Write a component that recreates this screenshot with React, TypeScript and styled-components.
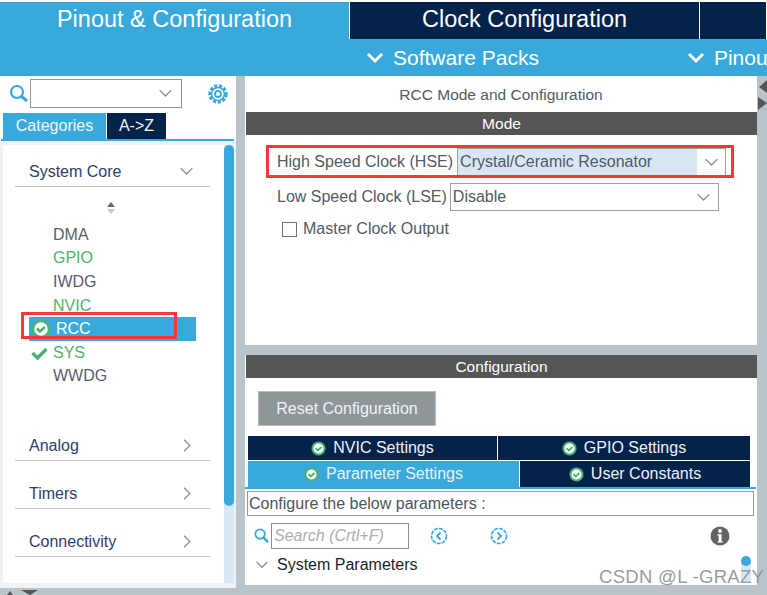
import React from "react";
import styled, { createGlobalStyle } from "styled-components";

const Global = createGlobalStyle`
  html, body { margin: 0; padding: 0; background: #fff; }
  #root { width: 767px; height: 595px; overflow: hidden; }
  * { box-sizing: border-box; }
`;
const Page = styled.div`
  position: relative; width: 767px; height: 595px; overflow: hidden;
  display: flex; flex-direction: column; padding-top: 2px; background: #fff;
  font-family: "Liberation Sans", Arial, sans-serif; color: #545a5f;
`;
const TopTabs = styled.div`display: flex; height: 37px; flex: none;`;
const TopTab = styled.div<{ $active?: boolean; $w: number }>`
  width: ${p => p.$w}px; flex: none; display: flex; align-items: center; justify-content: center;
  font-size: 23.5px; color: #fff; padding-bottom: 2px;
  background: ${p => (p.$active ? "#39a9dc" : "#03234b")};
  border-right: 1px solid #fff;
`;
const SubBar = styled.div`
  height: 37px; flex: none; background: #39a9dc; display: flex; align-items: center;
  color: #fff; font-size: 21px; white-space: nowrap; padding-left: 366px; gap: 148px; overflow: hidden;
`;
const SubItem = styled.div`display: flex; align-items: center; gap: 9px;`;
const Main = styled.div`flex: 1; display: flex; min-height: 0; background: #b8c4ca;`;
const Left = styled.div`
  width: 236px; flex: none; height: 512px; background: #fff; display: flex; flex-direction: column;
`;
const SearchRow = styled.div`display: flex; align-items: center; height: 29px; margin-top: 3px; padding-left: 9px;`;
const Combo = styled.div`
  width: 152px; height: 29px; margin-left: 1px; border: 1px solid #909599; display: flex;
  align-items: center; justify-content: flex-end; padding-right: 8px; background: #fff;
`;
const Gear = styled.div`margin-left: 25px; display: flex;`;
const CatTabs = styled.div`
  display: flex; gap: 1px; margin-top: 5px; margin-left: 3px; height: 26px; flex: none;
`;
const CatTab = styled.div<{ $active?: boolean; $w: number }>`
  width: ${p => p.$w}px; display: flex; align-items: center; justify-content: center;
  color: #f2f6f9; font-size: 16px; background: ${p => (p.$active ? "#39a9dc" : "#03234b")};
`;
const BlueRule = styled.div<{ $w: number; $ml: number }>`
  flex: none; height: 2px; width: ${p => p.$w}px; margin-left: ${p => p.$ml}px; background: #39a9dc;
`;
const ListFrame = styled.div`
  flex: 1; display: flex; background: #f0f2f5; padding: 4px 2px 5px 3px; min-height: 0;
`;
const List = styled.div`
  flex: 1; background: #fff; padding: 0 12px; display: flex; flex-direction: column; min-width: 0;
`;
const Scroll = styled.div`width: 10px; flex: none; background: #d8e7f4; display: flex;`;
const Thumb = styled.div`width: 100%; height: 361px; background: #39a9dc; border-radius: 5px;`;
const Category = styled.div<{ $mt: number }>`
  flex: none; height: 30px; margin-top: ${p => p.$mt}px; width: 195px;
  border-bottom: 1px solid #b8c2cb; display: flex; align-items: center; justify-content: space-between;
  padding: 0 16px 0 14px; color: #2d3e6b; font-size: 16px;
`;
const Sorter = styled.div`display: flex; justify-content: center; margin: 14px 0 0; width: 191px; height: 16px;`;
const Items = styled.div`display: flex; flex-direction: column; margin: 6px -12px 0 -12px;`;
const Item = styled.div<{ $ok?: boolean; $sel?: boolean }>`
  height: 23.6px; display: flex; align-items: center; font-size: 16px; margin-left: 26px; width: 167px;
  padding-left: ${p => (p.$sel || p.$ok ? "2px" : "24px")}; gap: 5px; white-space: nowrap;
  color: ${p => (p.$sel ? "#fff" : p.$ok ? "#4eb46a" : "#5b5e69")};
  background: ${p => (p.$sel ? "#39a9dc" : "transparent")};
`;
const Right = styled.div`
  width: 512px; margin-left: 9px; flex: none; height: 509px; display: flex; flex-direction: column; background: #fff;
`;
const PanelTitle = styled.div`
  height: 36px; flex: none; display: flex; align-items: center; justify-content: center;
  font-size: 15.5px; color: #545a5f; padding-top: 2px;
`;
const DarkBar = styled.div`
  height: 23px; flex: none; background: #545555; color: #fff; font-size: 15.5px;
  display: flex; align-items: center; justify-content: center; margin-left: 1px;
`;
const ModeBody = styled.div`height: 210px; flex: none; padding: 13px 34px 0 32px; display: flex; flex-direction: column;`;
const FormRow = styled.div`display: flex; align-items: center; gap: 4px; height: 28px; font-size: 16px; white-space: nowrap;`;
const Select = styled.div<{ $hl?: boolean }>`
  width: 269px; height: 28px; border: 1px solid #9aa0a4; display: flex; align-items: center;
  padding-left: 2px; justify-content: space-between; background: #fff; flex: none; overflow: hidden;
`;
const SelectText = styled.div<{ $hl?: boolean }>`
  flex: 1; align-self: stretch; display: flex; align-items: center;
  background: ${p => (p.$hl ? "#d7e7f5" : "transparent")}; margin-left: -2px; padding-left: 2px;
`;
const Caret = styled.div`width: 28px; flex: none; display: flex; justify-content: center;`;
const CheckRow = styled.div`display: flex; align-items: center; margin: 4px 0 0 5px; gap: 6px; height: 28px; font-size: 16px;`;
const Box = styled.div`width: 15px; height: 15px; border: 1px solid #6f7377; background: #fff;`;
const Band = styled.div`height: 10px; flex: none; background: #b8c4ca;`;
const ConfigBody = styled.div`flex: 1; min-height: 0; display: flex; flex-direction: column;`;
const ResetBtn = styled.div`
  width: 178px; height: 35px; margin: 13px 0 10px 13px; flex: none; background: #8f9699; border: 1px solid #b4bcc1;
  color: #f2f4f5; font-size: 16px; display: flex; align-items: center; justify-content: center;
`;
const TabRow = styled.div`display: flex; margin-left: 3px; width: 502px; gap: 1px; flex: none; height: 24px;`;
const SetTab = styled.div<{ $active?: boolean; $w: number }>`
  width: ${p => p.$w}px; flex: none; display: flex; align-items: center; justify-content: center; gap: 7px;
  font-size: 16px; color: #eef2f6; background: ${p => (p.$active ? "#39a9dc" : "#03234b")};
`;
const ParamBox = styled.div`
  height: 25px; margin: 2px 3px 0 2px; border: 1px solid #94999c; flex: none; display: flex; align-items: center;
  font-size: 16px; color: #4d5560; padding-left: 1px;
`;
const SearchLine = styled.div`display: flex; align-items: center; height: 27px; margin-top: 6px; padding-left: 9px; flex: none; padding-right: 27px;`;
const SearchBox = styled.div`
  width: 138px; height: 26px; margin-left: 2px; border: 1px solid #8b8f92; display: flex; align-items: center;
  font-style: italic; font-size: 16px; color: #a9aeb2; padding-left: 2px;
`;
const NavIcons = styled.div`display: flex; gap: 42px; margin-left: 21px;`;
const InfoSlot = styled.div`margin-left: auto; display: flex;`;
const SysRow = styled.div`
  display: flex; align-items: center; gap: 8px; padding-left: 10px; height: 20px; margin-top: 6px;
  font-size: 16px; color: #1b1f27; flex: none;
`;
const RedBox = styled.div<{ $x: number; $y: number; $w: number; $h: number }>`
  position: absolute; left: ${p => p.$x}px; top: ${p => p.$y}px; width: ${p => p.$w}px; height: ${p => p.$h}px;
  border: 3px solid #f7383b; pointer-events: none;
`;
const Watermark = styled.div`
  position: absolute; left: 599px; top: 566px; font-size: 18.5px; color: #8f9294; opacity: .9;
  font-family: "Liberation Sans", sans-serif; white-space: nowrap; letter-spacing: .3px;
`;
const Dot = styled.div`
  position: absolute; left: 741px; top: 556px; width: 10px; height: 10px; border-radius: 50%; background: #39a9dc;
`;
const DotTrack = styled.div`
  position: absolute; left: 741px; top: 561px; width: 10px; height: 20px; background: #d8e7f4;
`;
const EdgeArrows = styled.svg`position: absolute; left: 757px; top: 80px;`;
const BottomArrows = styled.svg`position: absolute; left: 0; top: 590px;`;

const Chev = ({ c = "#fff", w = 3, s = 18, dir = "down" }: { c?: string; w?: number; s?: number; dir?: string }) => (
  <svg width={s} height={s} viewBox="0 0 18 18" fill="none" stroke={c} strokeWidth={w}>
    {dir === "down" ? <path d="M2 5l7 7 7-7" /> : <path d="M6 2l7 7-7 7" />}
  </svg>
);
const OkIcon = ({ s = 15 }: { s?: number }) => (
  <svg width={s} height={s} viewBox="0 0 16 16">
    <circle cx="8" cy="8" r="7.5" fill="#4cb274" />
    <circle cx="8" cy="8" r="5.4" fill="#fff" />
    <path d="M4.8 7.6l2.4 2.4 4-3.6" fill="none" stroke="#4cb274" strokeWidth="2" />
  </svg>
);

export default function App() {
  return (
    <Page>
      <Global />
      <TopTabs>
        <TopTab $active $w={350}>Pinout &amp; Configuration</TopTab>
        <TopTab $w={350}>Clock Configuration</TopTab>
        <TopTab $w={67} />
      </TopTabs>
      <SubBar>
        <SubItem><Chev />Software Packs</SubItem>
        <SubItem><Chev />Pinout</SubItem>
      </SubBar>
      <Main>
        <Left>
          <SearchRow>
            <svg width="20" height="20" viewBox="0 0 20 20" fill="none" stroke="#39a9dc">
              <circle cx="8" cy="8" r="6" strokeWidth="2.2" />
              <path d="M12.5 12.5L18 17" strokeWidth="3" />
            </svg>
            <Combo><Chev c="#8a8e91" w={1.5} s={15} /></Combo>
            <Gear>
              <svg width="22" height="22" viewBox="0 0 22 22" fill="none" stroke="#39a9dc">
                <circle cx="11" cy="11" r="8" strokeWidth="3.4" strokeDasharray="3.2 1.6" />
                <circle cx="11" cy="11" r="6.4" strokeWidth="1.5" />
                <circle cx="11" cy="11" r="3" strokeWidth="1.8" />
              </svg>
            </Gear>
          </SearchRow>
          <CatTabs>
            <CatTab $active $w={103}>Categories</CatTab>
            <CatTab $w={59}>A-&gt;Z</CatTab>
          </CatTabs>
          <BlueRule $w={233} $ml={1} />
          <ListFrame>
            <List>
              <Category $mt={12}>System Core<Chev c="#8a8e91" w={1.5} s={15} /></Category>
              <Sorter>
                <svg width="10" height="14" viewBox="0 0 10 14">
                  <path d="M5 1l4 5H1z" fill="#66696c" />
                  <path d="M1 8h8l-4 5z" fill="#c5c8ca" />
                </svg>
              </Sorter>
              <Items>
                <Item>DMA</Item>
                <Item $ok style={{ paddingLeft: 24 }}>GPIO</Item>
                <Item>IWDG</Item>
                <Item $ok style={{ paddingLeft: 24 }}>NVIC</Item>
                <Item $sel><OkIcon s={20} />RCC</Item>
                <Item $ok>
                  <svg width="17" height="14" viewBox="0 0 17 14"><path d="M1.5 7l5 5 9-9" fill="none" stroke="#4cb274" strokeWidth="3.4" /></svg>
                  SYS
                </Item>
                <Item>WWDG</Item>
              </Items>
              <Category $mt={43}>Analog<Chev c="#8a8e91" w={1.5} s={15} dir="right" /></Category>
              <Category $mt={18}>Timers<Chev c="#8a8e91" w={1.5} s={15} dir="right" /></Category>
              <Category $mt={18}>Connectivity<Chev c="#8a8e91" w={1.5} s={15} dir="right" /></Category>
            </List>
            <Scroll><Thumb /></Scroll>
          </ListFrame>
        </Left>
        <Right>
          <PanelTitle>RCC Mode and Configuration</PanelTitle>
          <DarkBar>Mode</DarkBar>
          <ModeBody>
            <FormRow>High Speed Clock (HSE)
              <Select><SelectText $hl>Crystal/Ceramic Resonator</SelectText><Caret><Chev c="#8a8e91" w={1.5} s={15} /></Caret></Select>
            </FormRow>
            <FormRow style={{ marginTop: 7, gap: 3 }}>Low Speed Clock (LSE)
              <Select><SelectText>Disable</SelectText><Caret><Chev c="#8a8e91" w={1.5} s={15} /></Caret></Select>
            </FormRow>
            <CheckRow><Box />Master Clock Output</CheckRow>
          </ModeBody>
          <Band />
          <DarkBar>Configuration</DarkBar>
          <ConfigBody>
            <ResetBtn>Reset Configuration</ResetBtn>
            <TabRow>
              <SetTab $w={249}><OkIcon />NVIC Settings</SetTab>
              <SetTab $w={252}><OkIcon />GPIO Settings</SetTab>
            </TabRow>
            <TabRow style={{ marginTop: 1, height: 26 }}>
              <SetTab $active $w={271}><OkIcon />Parameter Settings</SetTab>
              <SetTab $w={230}><OkIcon />User Constants</SetTab>
            </TabRow>
            <BlueRule $w={511} $ml={0} />
            <ParamBox>Configure the below parameters :</ParamBox>
            <SearchLine>
              <svg width="15" height="15" viewBox="0 0 16 16" fill="none" stroke="#39a9dc">
                <circle cx="6.5" cy="6.5" r="5" strokeWidth="2" />
                <path d="M10 10l5 5" strokeWidth="2.6" />
              </svg>
              <SearchBox>Search (Crtl+F)</SearchBox>
              <NavIcons>
                <svg width="18" height="18" viewBox="0 0 18 18" fill="none" stroke="#39a9dc">
                  <circle cx="9" cy="9" r="7.5" strokeWidth="1.6" strokeDasharray="4 1" />
                  <path d="M10.5 5.5L7 9l3.5 3.5" strokeWidth="1.8" />
                </svg>
                <svg width="18" height="18" viewBox="0 0 18 18" fill="none" stroke="#39a9dc">
                  <circle cx="9" cy="9" r="7.5" strokeWidth="1.6" strokeDasharray="4 1" />
                  <path d="M7.5 5.5L11 9l-3.5 3.5" strokeWidth="1.8" />
                </svg>
              </NavIcons>
              <InfoSlot>
                <svg width="20" height="20" viewBox="0 0 20 20">
                  <circle cx="10" cy="10" r="9.5" fill="#636363" />
                  <circle cx="10" cy="5" r="1.9" fill="#fff" />
                  <path d="M7.5 8.2h4v7h1.3v1.4H7.5v-1.4h1.2V9.6H7.5z" fill="#fff" />
                </svg>
              </InfoSlot>
            </SearchLine>
            <SysRow><Chev c="#7d8083" w={1.5} s={14} />System Parameters</SysRow>
          </ConfigBody>
        </Right>
      </Main>
      <RedBox $x={266} $y={145} $w={468} $h={33} />
      <RedBox $x={21} $y={312} $w={156} $h={27} />
      <EdgeArrows width="10" height="36" viewBox="0 0 10 36">
        <path d="M10 0v13L2 7z" fill="#555" />
        <path d="M1 17l9 6-9 7z" fill="#555" />
      </EdgeArrows>
      <BottomArrows width="40" height="5" viewBox="0 0 40 5">
        <path d="M7 5l3-4 3 4z" fill="#555" />
        <path d="M21 0h17l-8 5z" fill="#555" />
      </BottomArrows>
      <DotTrack />
      <Dot />
      <Watermark>CSDN @L -GRAZY</Watermark>
    </Page>
  );
}
